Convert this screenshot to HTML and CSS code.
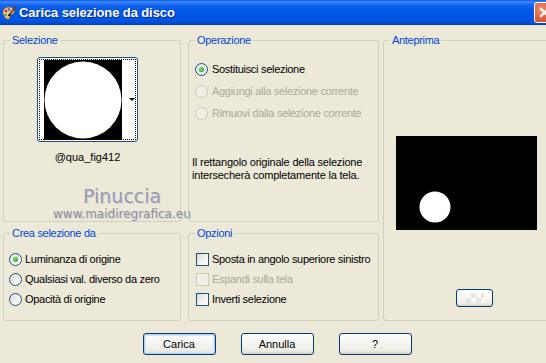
FILE: index.html
```html
<!DOCTYPE html>
<html lang="it">
<head>
    <meta charset="UTF-8">
    <meta name="viewport" content="width=device-width, initial-scale=1.0">
    <title>Carica selezione da disco</title>
    <link rel="stylesheet" href="styles.css">
</head>
<body>
    <div class="finestra">
        <div class="barra-titolo">
            <svg class="icona-app" width="16" height="16" viewBox="0 0 16 16">
                <path d="M2 9 C1 5 4 2 8 2 C12 2 14 5 13 8 C12 10 10 9 9 10 C8 11 10 13 8 14 C5 15 3 12 2 9 Z" fill="#E9C38A" stroke="#8A5A2B" stroke-width="0.8"/>
                <circle cx="5" cy="6" r="1.3" fill="#D9262A"/>
                <circle cx="8" cy="4.5" r="1.2" fill="#2F6FD8"/>
                <circle cx="4.5" cy="10" r="1.2" fill="#3BAA3B"/>
                <path d="M15 1 L9 9" stroke="#6B3F1B" stroke-width="1.6"/>
                <path d="M9 9 L7.5 11" stroke="#222" stroke-width="2"/>
            </svg>
            <span class="titolo">Carica selezione da disco</span>
            <span class="chiudi">
                <svg width="13" height="13" viewBox="0 0 13 13">
                    <path d="M3 3 L10 10 M10 3 L3 10" stroke="#fff" stroke-width="2.2" stroke-linecap="square"/>
                </svg>
            </span>
        </div>

        <div class="contenuto">
            <fieldset class="gruppo selezione">
                <legend>Selezione</legend>
                <div class="miniatura">
                    <div class="focus">
                        <svg class="img-sel" width="78" height="80" viewBox="0 0 78 80">
                            <rect width="78" height="80" fill="#000"/>
                            <circle cx="39" cy="40" r="38.5" fill="#fff"/>
                        </svg>
                        <span class="freccia"></span>
                    </div>
                </div>
                <div class="nome-sel">@qua_fig412</div>
                <div class="firma">Pinuccia</div>
                <div class="sito">www.maidiregrafica.eu</div>
            </fieldset>

            <fieldset class="gruppo operazione">
                <legend>Operazione</legend>
                <div class="opzioni-op">
                    <div class="riga"><span class="radio attivo"></span>Sostituisci selezione</div>
                    <div class="riga disattivo"><span class="radio"></span>Aggiungi alla selezione corrente</div>
                    <div class="riga disattivo"><span class="radio"></span>Rimuovi dalla selezione corrente</div>
                </div>
                <p class="descrizione">Il rettangolo originale della selezione<br>intersecherà completamente la tela.</p>
            </fieldset>

            <fieldset class="gruppo anteprima">
                <legend>Anteprima</legend>
                <svg class="img-anteprima" width="141" height="94" viewBox="0 0 141 94">
                    <rect width="141" height="94" fill="#000"/>
                    <circle cx="39" cy="71" r="15.5" fill="#fff"/>
                </svg>
                <div class="btn-trasparenza"><span class="scacchi"></span></div>
            </fieldset>

            <fieldset class="gruppo crea">
                <legend>Crea selezione da</legend>
                <div class="elenco">
                    <div class="riga-stretta"><span class="radio attivo"></span>Luminanza di origine</div>
                    <div class="riga-stretta"><span class="radio"></span>Qualsiasi val. diverso da zero</div>
                    <div class="riga-stretta"><span class="radio"></span>Opacità di origine</div>
                </div>
            </fieldset>

            <fieldset class="gruppo opzioni">
                <legend>Opzioni</legend>
                <div class="elenco">
                    <div class="riga-stretta"><span class="casella"></span>Sposta in angolo superiore sinistro</div>
                    <div class="riga-stretta disattivo"><span class="casella"></span>Espandi sulla tela</div>
                    <div class="riga-stretta"><span class="casella"></span>Inverti selezione</div>
                </div>
            </fieldset>
        </div>

        <div class="pulsanti">
            <button class="pulsante predefinito">Carica</button>
            <button class="pulsante">Annulla</button>
            <button class="pulsante">?</button>
        </div>
    </div>
</body>
</html>
```

FILE: styles.css
```css
body {
    margin: 0;
    background-color: #ECE9D8;
    overflow: hidden;
    font-family: "Liberation Sans", Arial, sans-serif;
    font-size: 11px;
    letter-spacing: -0.3px;
    color: #000;
}
.finestra {
    width: 556px;
    height: 363px;
    background-color: #ECE9D8;
}
.barra-titolo {
    height: 25px;
    display: flex;
    align-items: center;
    background: linear-gradient(#0A5FE4 0, #3D86F6 2px, #1565EE 5px, #0058E6 40%, #0055E2 80%, #0047CF 96%, #003AB4 100%);
}
.icona-app {
    margin-left: 1px;
    margin-right: 2px;
}
.titolo {
    color: #fff;
    font-weight: bold;
    font-size: 13px;
    letter-spacing: -0.1px;
    text-shadow: 1px 1px #0C2A8C;
}
.chiudi {
    margin-left: auto;
    margin-right: 1px;
    width: 21px;
    height: 21px;
    box-sizing: border-box;
    border: 1px solid #fff;
    border-radius: 3px;
    background: radial-gradient(circle at 35% 35%, #EE9478 0, #DE5B3C 55%, #C8432A 100%);
    display: flex;
    align-items: center;
    justify-content: center;
}

/* griglia dei riquadri */
.contenuto {
    display: grid;
    grid-template-columns: 185px 195px 173px;
    grid-template-rows: 188px 94px;
    row-gap: 5px;
    padding: 9px 0 0 3px;
}
.gruppo {
    margin: 0;
    padding: 0;
    min-width: 0;
    box-sizing: border-box;
    border: 1px solid #D0D0BF;
    border-radius: 3px;
}
.gruppo legend {
    margin-left: 6px;
    padding: 0 2px;
    color: #0046D5;
    line-height: 13px;
}
.selezione, .crea {
    width: 178px;
}
.operazione, .opzioni {
    width: 191px;
}
.anteprima {
    grid-column: 3;
    grid-row: 1 / span 2;
    width: 173px;
}

/* riquadro selezione */
.miniatura {
    width: 101px;
    height: 85px;
    box-sizing: border-box;
    margin: 10px 0 0 33px;
    border: 1px solid #1C5180;
    border-radius: 3px;
    background: #fff;
    padding: 1px;
}
.focus {
    height: 100%;
    box-sizing: border-box;
    border: 1px dotted #000;
    display: flex;
    align-items: center;
    padding-left: 4px;
}
.img-sel {
    display: block;
}
.freccia {
    margin-left: 7px;
    border-left: 3px solid transparent;
    border-right: 3px solid transparent;
    border-top: 3px solid #000;
}
.nome-sel {
    width: 101px;
    margin: 9px 0 0 33px;
    text-align: center;
    line-height: 13px;
    letter-spacing: 0;
}
.firma {
    margin: 22px 0 0 79px;
    font-family: "DejaVu Sans", sans-serif;
    font-size: 19px;
    line-height: 21px;
    letter-spacing: 0;
    color: #9A9AB6;
    text-shadow: 1px 1px #D6D4CC;
}
.sito {
    margin-left: 49px;
    font-family: "DejaVu Sans", sans-serif;
    font-size: 12px;
    line-height: 14px;
    letter-spacing: 0;
    color: #8E8EA2;
    text-shadow: 1px 1px #D6D4CC;
}

/* operazione */
.opzioni-op {
    margin-top: 11px;
    padding-left: 6px;
}
.riga {
    display: flex;
    align-items: center;
    height: 22px;
}
.riga .radio {
    margin-right: 4px;
}
.descrizione {
    margin: 32px 0 0 3px;
    line-height: 13px;
    letter-spacing: -0.2px;
}
.disattivo {
    color: #ACA899;
}

/* controlli */
.radio {
    width: 13px;
    height: 13px;
    box-sizing: border-box;
    border: 1px solid #1C5180;
    border-radius: 50%;
    background: linear-gradient(135deg, #DCDCD4 0, #F6F6F2 60%, #FFFFFF 100%);
    display: flex;
    align-items: center;
    justify-content: center;
    flex: none;
}
.radio.attivo::after {
    content: "";
    width: 5px;
    height: 5px;
    border-radius: 50%;
    background: radial-gradient(circle at 40% 40%, #7CE07A 0, #2BA82B 70%, #1E8E1E 100%);
}
.disattivo .radio, .disattivo .casella {
    border-color: #CAC8BB;
    background: #F1EFE5;
}
.casella {
    width: 13px;
    height: 13px;
    box-sizing: border-box;
    border: 1px solid #1C5180;
    background: linear-gradient(135deg, #DCDCD4 0, #F4F4F0 60%, #FFFFFF 100%);
    flex: none;
    margin-right: 3px;
}
.elenco {
    margin-top: 9px;
}
.crea .elenco {
    padding-left: 5px;
}
.crea .radio {
    margin-right: 3px;
}
.opzioni .elenco {
    padding-left: 7px;
}
.riga-stretta {
    display: flex;
    align-items: center;
    height: 20px;
}

/* anteprima */
.img-anteprima {
    display: block;
    margin: 89px 0 0 12px;
}
.btn-trasparenza {
    width: 37px;
    height: 18px;
    box-sizing: border-box;
    margin: 59px 0 0 72px;
    border: 1px solid #003C74;
    border-radius: 3px;
    background: linear-gradient(#FFFFFF, #F0F0EA 80%, #D6D0C5);
    display: flex;
    align-items: center;
    justify-content: center;
}
.scacchi {
    width: 18px;
    height: 10px;
    background: repeating-conic-gradient(#E2E2DE 0 25%, #FAFAF8 0 50%) 0 0 / 10px 10px;
    opacity: 0.8;
}

/* pulsanti */
.pulsanti {
    display: flex;
    justify-content: center;
    gap: 25px;
    padding-top: 12px;
    padding-right: 2px;
}
.pulsante {
    width: 73px;
    height: 22px;
    padding: 0;
    border: 1px solid #003C74;
    border-radius: 3px;
    background: linear-gradient(#FFFFFF 0, #F4F4F0 50%, #ECEBE6 85%, #D6D0C5 100%);
    font-family: "Liberation Sans", Arial, sans-serif;
    font-size: 11px;
    color: #000;
}
.predefinito {
    box-shadow: inset 0 0 0 1px #B8D0F8, inset 0 0 0 2px #D6E4FB;
}
```
